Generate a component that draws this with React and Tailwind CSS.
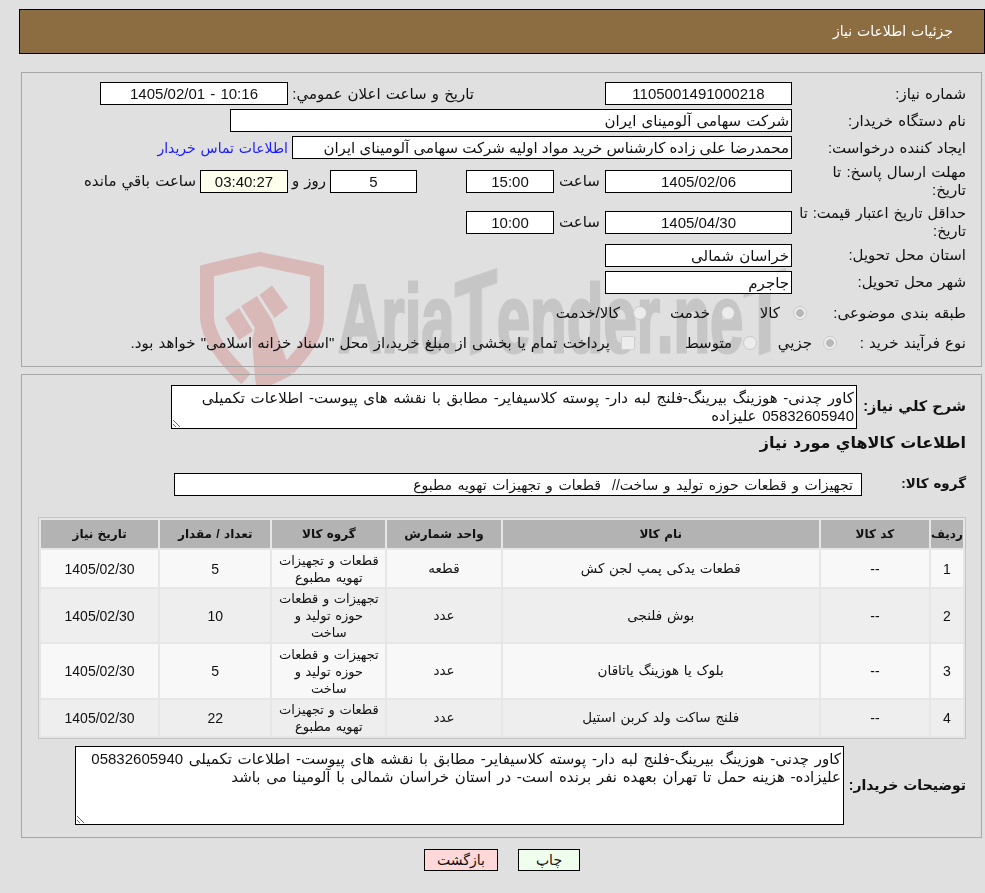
import React from 'react';

const rows = [
  { id: 1, code: '--', name: 'قطعات يدکی پمپ لجن کش', unit: 'قطعه', group: 'قطعات و تجهيزات\nتهويه مطبوع', qty: 5, date: '1405/02/30', rowClass: 'h-[37px] bg-[#f8f8f8]' },
  { id: 2, code: '--', name: 'بوش فلنجی', unit: 'عدد', group: 'تجهيزات و قطعات\nحوزه توليد و\nساخت', qty: 10, date: '1405/02/30', rowClass: 'h-[53px] bg-[#eeeeee]' },
  { id: 3, code: '--', name: 'بلوک يا هوزينگ ياتاقان', unit: 'عدد', group: 'تجهيزات و قطعات\nحوزه توليد و\nساخت', qty: 5, date: '1405/02/30', rowClass: 'h-[54px] bg-[#f8f8f8]' },
  { id: 4, code: '--', name: 'فلنج ساکت ولد کربن استيل', unit: 'عدد', group: 'قطعات و تجهيزات\nتهويه مطبوع', qty: 22, date: '1405/02/30', rowClass: 'h-[36px] bg-[#eeeeee]' },
];

const Box = ({ className = 'bg-white', children }) => (
  <div className={`h-[23px] shrink-0 overflow-hidden whitespace-pre border border-black leading-[22px] ${className}`}>{children}</div>
);

const Radio = ({ checked, className = '' }) => (
  <input
    type="radio"
    disabled
    defaultChecked={checked}
    className={`h-[14px] w-[14px] shrink-0 appearance-none rounded-full border border-[#c8c8c8] bg-[#ececec] checked:bg-[radial-gradient(circle,#b8b8b8_42%,#ececec_48%)] ${className}`}
  />
);

const Watermark = () => (
  <div className="pointer-events-none absolute left-0 top-0 z-0 h-[440px] w-[985px] overflow-hidden">
    <svg className="absolute left-0 top-0" width="985" height="440" viewBox="0 0 985 440">
      <path
        d="M288 369C305 351 317 335 317 316L317 271C295 266 278 263 260 259C242 263 225 266 207 271L207 318C209 340 225 360 246 379"
        fill="none"
        stroke="#d9b8b8"
        strokeWidth="14"
      />
      <path d="M225 318L239 308L253 331L239 340Z" fill="#d9b8b8" />
      <path d="M241 306L257 296L272 320L292 375L257 392L255 378L252 340L255 328Z" fill="#d9b8b8" />
      <path d="M259.5 295L272 285.5L288 307.5L274.5 318Z" fill="#d9b8b8" />
    </svg>
    <div
      dir="ltr"
      className="absolute left-[338px] top-[264px] origin-left scale-x-[0.625] whitespace-nowrap text-[96px] font-bold leading-[110px] text-[#c6c6c6] [-webkit-text-stroke:3px_#c6c6c6] [font-family:'Liberation_Sans',sans-serif]"
    >
      Aria<span className="inline-block -skew-y-[12deg] text-[110px] leading-[100px]">T</span>ender.ne<span className="inline-block -skew-y-[12deg] text-[110px] leading-[100px]">T</span>
    </div>
  </div>
);

const App = () => {
  return (
    <div
      dir="rtl"
      className="relative min-h-[893px] bg-[#e0e0e0] pb-[22px] pl-[19px] pt-[9px] text-[15px] text-[#111] [font-family:'Liberation_Sans','DejaVu_Sans',sans-serif] [word-spacing:1px]"
    >
      <Watermark />
      <div className="relative z-10">
        <div className="flex h-[45px] items-center border border-black bg-[#8c6d42] pr-[31px] text-[14px] text-white">
          جزئيات اطلاعات نياز
        </div>

        <div className="ml-[2px] mr-[3px] mt-[18px] h-[295px] border border-[#a6a6a6] pr-[15px] pt-[9px]">
          <div className="mb-[4px] flex h-[23px] items-center">
            <div className="w-[174px] shrink-0 pt-[2px]">شماره نياز:</div>
            <Box className="w-[187px] bg-white text-center">1105001491000218</Box>
            <div className="mr-[131px] w-[186px] shrink-0 whitespace-nowrap pt-[2px]">تاريخ و ساعت اعلان عمومي:</div>
            <Box className="w-[188px] bg-white text-center">10:16 - 1405/02/01</Box>
          </div>
          <div className="mb-[4px] flex h-[23px] items-center">
            <div className="w-[174px] shrink-0 pt-[2px]">نام دستگاه خريدار:</div>
            <Box className="w-[562px] bg-white pr-[2px]">شرکت سهامی آلومينای ايران</Box>
          </div>
          <div className="mb-[4px] flex h-[23px] items-center">
            <div className="w-[174px] shrink-0 pt-[2px]">ايجاد کننده درخواست:</div>
            <Box className="w-[500px] bg-white pr-[2px] [word-spacing:0px]">محمدرضا علی زاده کارشناس خريد مواد اوليه شرکت سهامی آلومينای ايران</Box>
            <a href="#" className="mr-[4px] whitespace-nowrap pt-[2px] text-[14px] text-[#1a1aff]">اطلاعات تماس خريدار</a>
          </div>
          <div className="mb-[5px] flex h-[36px] items-center">
            <div className="w-[174px] shrink-0 leading-[18px]">مهلت ارسال پاسخ: تا<br />تاريخ:</div>
            <Box className="w-[187px] bg-white text-center">1405/02/06</Box>
            <div className="w-[51px] shrink-0 text-center">ساعت</div>
            <Box className="w-[88px] bg-white text-center">15:00</Box>
            <Box className="mr-[49px] w-[87px] bg-white text-center">5</Box>
            <div className="w-[42px] shrink-0 text-center">روز و</div>
            <Box className="w-[88px] bg-[#ffffee] text-center">03:40:27</Box>
            <div className="mr-[4px] whitespace-nowrap">ساعت باقي مانده</div>
          </div>
          <div className="mb-[4px] flex h-[36px] items-center">
            <div className="w-[174px] shrink-0 whitespace-nowrap text-[14.5px] leading-[18px]">حداقل تاريخ اعتبار قيمت: تا<br />تاريخ:</div>
            <Box className="w-[187px] bg-white text-center">1405/04/30</Box>
            <div className="w-[51px] shrink-0 text-center">ساعت</div>
            <Box className="w-[88px] bg-white text-center">10:00</Box>
          </div>
          <div className="mb-[4px] flex h-[23px] items-center">
            <div className="w-[174px] shrink-0">استان محل تحويل:</div>
            <Box className="w-[187px] bg-white pr-[2px]">خراسان شمالی</Box>
          </div>
          <div className="mb-[9px] flex h-[23px] items-center">
            <div className="w-[174px] shrink-0">شهر محل تحويل:</div>
            <Box className="w-[187px] bg-white pr-[2px]">جاجرم</Box>
          </div>
          <div className="mb-[10px] flex h-[20px] items-center">
            <div className="w-[159px] shrink-0 whitespace-nowrap">طبقه بندی موضوعی:</div>
            <Radio checked />
            <div className="mr-[13px] w-[20px] shrink-0 whitespace-nowrap">کالا</div>
            <Radio className="mr-[25px]" />
            <div className="mr-[11px] w-[40px] shrink-0 whitespace-nowrap">خدمت</div>
            <Radio className="mr-[23px]" />
            <div className="mr-[13px] whitespace-nowrap">کالا/خدمت</div>
          </div>
          <div className="flex h-[20px] items-center">
            <div className="w-[129px] shrink-0 whitespace-pre">نوع فرآيند خريد :</div>
            <Radio checked />
            <div className="mr-[11px] w-[34px] shrink-0 whitespace-nowrap">جزيي</div>
            <Radio className="mr-[21px]" />
            <div className="mr-[11px] w-[46px] shrink-0 whitespace-nowrap">متوسط</div>
            <input type="checkbox" disabled className="mr-[51px] h-[14px] w-[14px] shrink-0 appearance-none rounded-[2px] border border-[#cfcfcf] bg-[#ececec]" />
            <div className="mr-[11px] whitespace-nowrap">پرداخت تمام يا بخشی از مبلغ خريد،از محل "اسناد خزانه اسلامی" خواهد بود.</div>
          </div>
        </div>

        <div className="ml-[2px] mr-[3px] mt-[7px] h-[464px] border border-[#a6a6a6] pr-[15px] pt-[10px]">
          <div className="flex items-center">
            <div className="w-[109px] shrink-0 whitespace-nowrap text-[14.5px] font-bold">شرح كلي نياز:</div>
            <textarea
              readOnly
              className="h-[44px] w-[686px] overflow-hidden border border-black bg-white px-[2px] pt-[3px] leading-[18px] outline-none [word-spacing:1.5px]"
              defaultValue={'کاور چدنی- هوزينگ بيرينگ-فلنج لبه دار- پوسته کلاسيفاير- مطابق با نقشه های پيوست- اطلاعات تکميلی\n05832605940 عليزاده'}
            />
          </div>
          <div className="mt-[4px] h-[20px] text-[16px] font-bold leading-[20px]">اطلاعات كالاهاي مورد نياز</div>
          <div className="mt-[20px] flex items-center">
            <div className="w-[104px] shrink-0 text-[13.5px] font-bold">گروه کالا:</div>
            <Box className="w-[688px] bg-white pr-[8px] text-[14px] [word-spacing:1.7px]">تجهيزات و قطعات حوزه توليد و ساخت//  قطعات و تجهيزات تهويه مطبوع</Box>
          </div>

          <table className="mt-[21px] w-[928px] table-fixed border-separate border-spacing-[2px] border border-[#c4c4c4] bg-[#e6e6e6] text-center text-[14px] leading-[16px]">
            <colgroup>
              <col className="w-[32px]" />
              <col className="w-[108px]" />
              <col className="w-[316px]" />
              <col className="w-[113px]" />
              <col className="w-[113px]" />
              <col className="w-[110px]" />
              <col className="w-[117px]" />
            </colgroup>
            <thead>
              <tr className="h-[28px] bg-[#b3b3b3] text-[12px] font-bold">
                <th>رديف</th>
                <th>کد کالا</th>
                <th>نام کالا</th>
                <th>واحد شمارش</th>
                <th>گروه کالا</th>
                <th>تعداد / مقدار</th>
                <th>تاريخ نياز</th>
              </tr>
            </thead>
            <tbody>
              {rows.map((row) => (
                <tr key={row.id} className={row.rowClass}>
                  <td>{row.id}</td>
                  <td>{row.code}</td>
                  <td className="text-[13.5px]">{row.name}</td>
                  <td className="text-[13.5px]">{row.unit}</td>
                  <td className="whitespace-pre-line text-[13px] leading-[17px]">{row.group}</td>
                  <td>{row.qty}</td>
                  <td>{row.date}</td>
                </tr>
              ))}
            </tbody>
          </table>

          <div className="mt-[7px] flex items-center">
            <div className="w-[122px] shrink-0 whitespace-nowrap text-[14px] font-bold">توضيحات خريدار:</div>
            <textarea
              readOnly
              className="h-[79px] w-[769px] overflow-hidden border border-black bg-white px-[2px] pt-[3px] leading-[18px] outline-none [word-spacing:1.5px]"
              defaultValue={'کاور چدنی- هوزينگ بيرينگ-فلنج لبه دار- پوسته کلاسيفاير- مطابق با نقشه های پيوست- اطلاعات تکميلی 05832605940\nعليزاده- هزينه حمل تا تهران بعهده نفر برنده است- در استان خراسان شمالی با آلومينا می باشد'}
            />
          </div>
        </div>

        <div className="mt-[11px] flex justify-center gap-[20px]">
          <button className="h-[22px] w-[62px] border border-black bg-[#eeffee] text-[14px] leading-[20px]">چاپ</button>
          <button className="h-[22px] w-[74px] border border-black bg-[#ffd9d9] text-[14px] leading-[20px]">بازگشت</button>
        </div>
      </div>
    </div>
  );
};

export default App;
